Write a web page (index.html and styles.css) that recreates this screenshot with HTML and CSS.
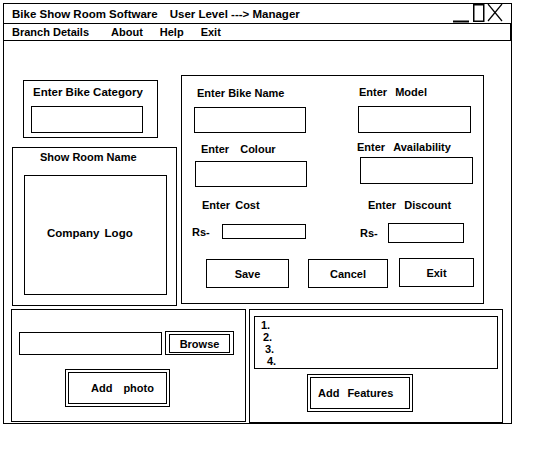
FILE: index.html
```html
<!DOCTYPE html>
<html lang="en">
<head>
    <meta charset="UTF-8">
    <title>Bike Show Room Software</title>
    <link rel="stylesheet" href="styles.css">
</head>
<body>
    <div class="window">
        <div class="title-bar">
            <span>Bike Show Room Software</span>
            <span class="user-level">User Level ---&gt; Manager</span>
            <svg class="win-controls" width="51" height="19" viewBox="0 0 51 19">
                <line x1="1" y1="17.5" x2="17" y2="17.5" stroke="#000" stroke-width="2"/>
                <rect x="21.75" y="0.75" width="10" height="16.5" fill="none" stroke="#000" stroke-width="1.5"/>
                <line x1="36" y1="0" x2="50" y2="17" stroke="#000" stroke-width="1.2"/>
                <line x1="50" y1="0" x2="36" y2="17" stroke="#000" stroke-width="1.2"/>
            </svg>
        </div>
        <div class="menu-bar">
            <span class="menu-item branch">Branch Details</span>
            <span class="menu-item">About</span>
            <span class="menu-item">Help</span>
            <span class="menu-item">Exit</span>
        </div>

        <div class="top-row">
            <div class="side-col">
                <div class="category-box">
                    <div class="category-label">Enter Bike Category</div>
                    <div class="text-field category-field"></div>
                </div>
                <div class="showroom-box">
                    <div class="showroom-label">Show Room Name</div>
                    <div class="logo-box">Company Logo</div>
                </div>
            </div>

            <div class="bike-form">
                <div class="form-fields">
                    <div class="field-col left">
                        <div class="label name-label">Enter Bike Name</div>
                        <div class="text-field name-field"></div>
                        <div class="label colour-label">Enter <span class="gap-lg">Colour</span></div>
                        <div class="text-field colour-field"></div>
                        <div class="label cost-label">Enter <span class="gap-sm">Cost</span></div>
                        <div class="money-row cost-row">
                            <span class="rs">Rs-</span>
                            <div class="text-field cost-field"></div>
                        </div>
                    </div>
                    <div class="field-col right">
                        <div class="label model-label">Enter <span class="gap-md">Model</span></div>
                        <div class="text-field model-field"></div>
                        <div class="label avail-label">Enter <span class="gap-md">Availability</span></div>
                        <div class="text-field avail-field"></div>
                        <div class="label discount-label">Enter <span class="gap-md">Discount</span></div>
                        <div class="money-row discount-row">
                            <span class="rs">Rs-</span>
                            <div class="text-field discount-field"></div>
                        </div>
                    </div>
                </div>
                <div class="form-buttons">
                    <div class="btn save-btn">Save</div>
                    <div class="btn cancel-btn">Cancel</div>
                    <div class="btn exit-btn">Exit</div>
                </div>
            </div>
        </div>

        <div class="bottom-row">
            <div class="photo-box">
                <div class="browse-row">
                    <div class="text-field browse-field"></div>
                    <div class="double-btn browse-btn"><span class="inner">Browse</span></div>
                </div>
                <div class="double-btn big-btn photo-btn">
                    <span class="inner"><span>Add</span> <span class="gap-xl">photo</span></span>
                </div>
            </div>
            <div class="features-box">
                <div class="feature-list">
                    <div class="item i1">1.</div>
                    <div class="item i2">2.</div>
                    <div class="item i3">3.</div>
                    <div class="item i4">4.</div>
                </div>
                <div class="double-btn big-btn features-btn">
                    <span class="inner"><span>Add</span> <span class="gap-lg">Features</span></span>
                </div>
            </div>
        </div>
    </div>
</body>
</html>
```

FILE: styles.css
```css
* {
    box-sizing: border-box;
}

body {
    margin: 0;
    padding: 3px;
    background: #fff;
    color: #000;
    font-family: "Liberation Sans", Arial, sans-serif;
    font-size: 11px;
    font-weight: bold;
}

.window {
    width: 509px;
    height: 421px;
    border: 1px solid #000;
}

/* title + menu */
.title-bar {
    display: flex;
    align-items: flex-start;
    height: 20px;
    padding: 3px 0 0 8px;
    border-bottom: 1px solid #000;
    font-size: 11.5px;
    line-height: 14px;
}

.user-level {
    margin-left: 12px;
}

.win-controls {
    margin-left: auto;
    margin-right: 8px;
    margin-top: -3px;
}

.menu-bar {
    display: flex;
    gap: 17px;
    height: 17px;
    padding-left: 8px;
    line-height: 16px;
    border-bottom: 1px solid #000;
    border-right: 1px solid #000;
}

.menu-item.branch {
    margin-right: 5px;
}

.text-field {
    border: 1px solid #000;
    background: #fff;
}

.label {
    line-height: 14px;
    height: 14px;
    white-space: nowrap;
}

.gap-sm { margin-left: 2px; }
.gap-md { margin-left: 5px; }
.gap-lg { margin-left: 8px; }
.gap-xl { margin-left: 11px; }

/* top area */
.top-row {
    display: flex;
    align-items: flex-start;
    margin-top: 34px;
    padding-left: 8px;
}

.side-col {
    width: 165px;
}

.category-box {
    width: 135px;
    height: 58px;
    margin: 5px 0 0 11px;
    padding: 4px 0 0 9px;
    border: 1px solid #000;
}

.category-label {
    font-size: 11.5px;
    line-height: 14px;
}

.category-field {
    width: 112px;
    height: 27px;
    margin: 7px 0 0 -2px;
}

.showroom-box {
    width: 165px;
    height: 159px;
    margin-top: 9px;
    padding-top: 2px;
    border: 1px solid #000;
}

.showroom-label {
    padding-left: 27px;
    line-height: 14px;
}

.logo-box {
    display: flex;
    align-items: center;
    width: 143px;
    height: 120px;
    margin: 11px 0 0 11px;
    padding: 0 0 5px 22px;
    border: 1px solid #000;
    font-size: 11.5px;
    word-spacing: 2px;
}

.bike-form {
    width: 303px;
    height: 229px;
    margin-left: 4px;
    border: 1px solid #000;
}

.form-fields {
    display: flex;
    align-items: flex-start;
}

.field-col.left {
    width: 175px;
    padding-top: 10px;
}

.field-col.right {
    padding-top: 9px;
}

.name-label { margin-left: 15px; }
.name-field { width: 112px; height: 26px; margin: 7px 0 0 12px; }
.colour-label { margin: 9px 0 0 19px; }
.colour-field { width: 112px; height: 26px; margin: 5px 0 0 13px; }
.cost-label { margin: 11px 0 0 20px; }

.model-label { margin-left: 2px; }
.model-field { width: 113px; height: 27px; margin: 7px 0 0 1px; }
.avail-label { margin-top: 7px; }
.avail-field { width: 113px; height: 27px; margin: 3px 0 0 3px; }
.discount-label { margin: 14px 0 0 11px; }

.money-row {
    display: flex;
    align-items: center;
}

.rs {
    line-height: 14px;
}

.cost-row {
    align-items: flex-end;
    margin: 12px 0 0 10px;
}

.cost-row .rs { margin-right: 12px; }
.cost-field { width: 84px; height: 15px; }

.discount-row { margin: 11px 0 0 3px; }
.discount-row .rs { margin-right: 10px; }
.discount-field { width: 76px; height: 20px; }

.form-buttons {
    display: flex;
    align-items: flex-start;
    margin-top: 15px;
}

.btn {
    display: flex;
    align-items: center;
    justify-content: center;
    height: 29px;
    border: 1px solid #000;
}

.save-btn { width: 83px; margin: 1px 0 0 24px; }
.cancel-btn { width: 80px; margin: 1px 0 0 19px; }
.exit-btn { width: 75px; margin-left: 11px; }

/* bottom area */
.bottom-row {
    display: flex;
    margin-top: 3px;
    padding-left: 7px;
}

.photo-box {
    width: 235px;
    height: 113px;
    border: 1px solid #000;
}

.browse-row {
    display: flex;
    align-items: flex-start;
    margin-top: 21px;
    padding-left: 7px;
}

.browse-field {
    width: 143px;
    height: 23px;
    margin: 1px 3px 0 0;
}

.double-btn {
    display: flex;
    padding: 2px;
    border: 1px solid #000;
}

.double-btn .inner {
    display: flex;
    align-items: center;
    flex: 1;
    border: 1px solid #000;
}

.browse-btn {
    width: 69px;
    height: 24px;
    padding: 2px 3px 1px;
}

.browse-btn .inner {
    justify-content: center;
}

.big-btn {
    width: 105px;
    height: 38px;
}

.photo-btn {
    margin: 14px 0 0 53px;
}

.photo-btn .inner {
    padding: 0 0 0 22px;
}

.features-box {
    width: 254px;
    height: 114px;
    margin-left: 3px;
    border: 1px solid #000;
}

.feature-list {
    width: 244px;
    height: 53px;
    margin: 6px 0 0 4px;
    padding-top: 2px;
    border: 1px solid #000;
    line-height: 12px;
}

.item.i1 { margin-left: 6px; }
.item.i2 { margin-left: 8px; }
.item.i3 { margin-left: 10px; }
.item.i4 { margin-left: 12px; }

.features-btn {
    width: 106px;
    margin: 5px 0 0 57px;
}

.features-btn .inner {
    padding: 0 0 1px 7px;
}
```
